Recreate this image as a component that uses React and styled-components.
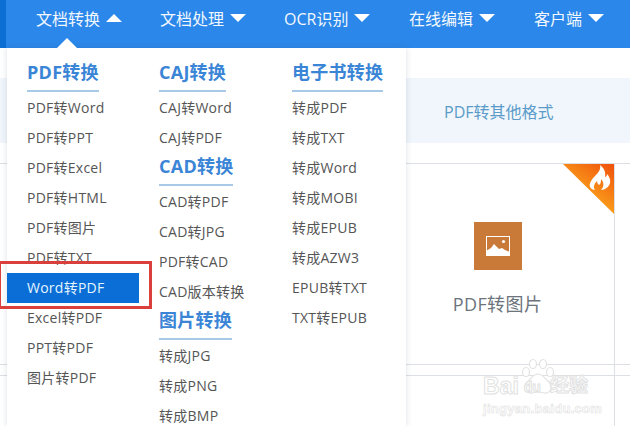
import React from 'react';
import styled, { createGlobalStyle } from 'styled-components';

const GlobalStyle = createGlobalStyle`
  html, body {
    margin: 0;
    padding: 0;
    background: #fff;
  }
  body {
    font-family: "Open Sans", "Noto Sans CJK SC", sans-serif;
  }
`;

const Page = styled.div`
  position: relative;
  width: 630px;
  height: 426px;
  overflow: hidden;
  background: #fff;
`;

const NavBar = styled.nav`
  display: flex;
  height: 48px;
  padding-left: 30px;
  background: #2b87e9;
  border-left: 6px solid #0b6fd4;
  box-sizing: border-box;
`;

const NavItem = styled.div`
  display: flex;
  align-items: center;
  gap: 6px;
  width: ${props => props.width}px;
  height: 36px;
  color: #f2f8fe;
  font-size: 16px;
`;

const Arrow = styled.span`
  width: 0;
  height: 0;
  border-left: 8px solid transparent;
  border-right: 8px solid transparent;
  ${props => (props.up ? 'border-bottom: 8px solid #fff;' : 'border-top: 8px solid #fff;')}
`;

const Content = styled.main`
  padding-top: 30px;
`;

const TabStrip = styled.div`
  display: flex;
  align-items: center;
  height: 65px;
  padding-left: 444px;
  background: #f0f6fb;
  color: #5b9bc9;
  font-size: 16px;
`;

const CardRow = styled.div`
  display: flex;
  height: 200px;
  margin-top: 20px;
  border-top: 1px solid #dcdfe4;
  border-bottom: 1px solid #dcdfe4;
`;

const Card = styled.div`
  position: relative;
  display: flex;
  flex-direction: column;
  align-items: center;
  width: 615px;
  padding: 58px 0 0 381px;
  box-sizing: border-box;
  border-right: 1px solid #dcdfe4;
`;

const Corner = styled.svg`
  position: absolute;
  top: 0;
  right: 0;
`;

const CardIcon = styled.div`
  display: flex;
  align-items: center;
  justify-content: center;
  width: 48px;
  height: 48px;
  background: #c97a38;
`;

const CardLabel = styled.div`
  margin-top: 20px;
  color: #6c747c;
  font-size: 18px;
  letter-spacing: 0.4px;
  white-space: nowrap;
`;

const RowGap = styled.div`
  width: 614px;
  height: 10px;
  border-right: 1px solid #dcdfe4;
`;

const LowerRow = styled.div`
  border-top: 1px solid #dcdfe4;
`;

const LowerCell = styled.div`
  width: 614px;
  height: 60px;
  border-right: 1px solid #dcdfe4;
`;

const Dropdown = styled.div`
  position: absolute;
  top: 48px;
  left: 7px;
  display: flex;
  width: 399px;
  height: 378px;
  padding-left: 20px;
  box-sizing: border-box;
  background: #fff;
  box-shadow: 0 0 6px rgba(60, 80, 110, 0.18);
`;

const Notch = styled.span`
  position: absolute;
  top: -10px;
  left: 50px;
  width: 0;
  height: 0;
  border-left: 10px solid transparent;
  border-right: 10px solid transparent;
  border-bottom: 10px solid #fff;
`;

const Column = styled.div`
  display: flex;
  flex-direction: column;
  align-items: flex-start;
  width: ${props => props.width}px;
  padding-top: 11px;
`;

const GroupTitle = styled.div`
  margin-bottom: 1px;
  padding-bottom: 4px;
  color: #3a85d6;
  font-size: 18px;
  font-weight: 700;
  line-height: 27px;
  letter-spacing: 0.25px;
  white-space: nowrap;
  border-bottom: 2px solid #a9c9e8;
`;

const MenuLink = styled.div`
  height: 30px;
  color: #555;
  font-size: 14px;
  line-height: 30px;
  letter-spacing: 0.25px;
  white-space: nowrap;
`;

const ActiveLink = styled(MenuLink)`
  width: 132px;
  margin-left: -20px;
  padding-left: 20px;
  box-sizing: border-box;
  color: #e4f6ff;
  background: #0b6dd6;
`;

const Highlight = styled.div`
  position: absolute;
  top: 261px;
  left: -2px;
  width: 154px;
  height: 48px;
  border: 3px solid #d9403c;
  box-sizing: border-box;
`;

const Watermark = styled.div`
  position: absolute;
  top: 358px;
  left: 483px;
  width: 116px;
  padding-top: 16px;
`;

const Paw = styled.svg`
  position: absolute;
  top: 0;
  left: 37px;
`;

const WatermarkLogo = styled.div`
  position: relative;
  display: flex;
  align-items: center;
  color: #fff;
  font-family: "Liberation Sans", "Noto Sans CJK SC", sans-serif;
  font-size: 23px;
  font-weight: 700;
  line-height: 22px;
  -webkit-text-stroke: 1px #e2e2e2;
`;

const WatermarkDu = styled.span`
  margin: 2px 9px 0 5px;
  font-size: 14px;
`;

const WatermarkCn = styled.span`
  font-size: 19px;
`;

const WatermarkUrl = styled.div`
  margin-top: 4px;
  color: #fff;
  font-family: "Liberation Sans", sans-serif;
  font-size: 13px;
  font-weight: 700;
  line-height: 14px;
  letter-spacing: 0.3px;
  white-space: nowrap;
  -webkit-text-stroke: 0.6px #e2e2e2;
`;

const columns = [
  {
    width: 132,
    groups: [
      {
        title: 'PDF转换',
        links: ['PDF转Word', 'PDF转PPT', 'PDF转Excel', 'PDF转HTML', 'PDF转图片', 'PDF转TXT', 'Word转PDF', 'Excel转PDF', 'PPT转PDF', '图片转PDF'],
      },
    ],
  },
  {
    width: 133,
    groups: [
      { title: 'CAJ转换', links: ['CAJ转Word', 'CAJ转PDF'] },
      { title: 'CAD转换', links: ['CAD转PDF', 'CAD转JPG', 'PDF转CAD', 'CAD版本转换'] },
      { title: '图片转换', links: ['转成JPG', '转成PNG', '转成BMP'] },
    ],
  },
  {
    width: 110,
    groups: [
      {
        title: '电子书转换',
        links: ['转成PDF', '转成TXT', '转成Word', '转成MOBI', '转成EPUB', '转成AZW3', 'EPUB转TXT', 'TXT转EPUB'],
      },
    ],
  },
];

const navItems = [
  { label: '文档转换', width: 124, up: true },
  { label: '文档处理', width: 124 },
  { label: 'OCR识别', width: 125 },
  { label: '在线编辑', width: 125 },
  { label: '客户端', width: 90 },
];

const App = () => (
  <Page>
    <GlobalStyle />
    <NavBar>
      {navItems.map(item => (
        <NavItem key={item.label} width={item.width}>
          {item.label}
          <Arrow up={item.up} />
        </NavItem>
      ))}
    </NavBar>
    <Content>
      <TabStrip>PDF转其他格式</TabStrip>
      <CardRow>
        <Card>
          <Corner width="51" height="50" viewBox="0 0 51 50">
            <defs>
              <linearGradient id="hot" x1="1" y1="0" x2="0.45" y2="0.75">
                <stop offset="0" stopColor="#f0500c" />
                <stop offset="1" stopColor="#fba61c" />
              </linearGradient>
            </defs>
            <polygon points="0,0 51,0 51,50" fill="url(#hot)" />
            <path d="M37 1c1 4-1 7-5 11-4 4-6 8-5 11 1 2 3 3 5 3-2-3-1-6 2-9 0 2 1 3 2 4 2-1 2-4 2-6 2 2 3 5 2 8-1 1-1 2-2 3 4 0 8-3 9-7 1-3-1-7-3-9 0 2-1 3-2 3 1-5-1-9-5-12z" fill="#fff" />
          </Corner>
          <CardIcon>
            <svg width="24" height="20" viewBox="0 0 24 20">
              <rect x="0.5" y="0.5" width="23" height="19" fill="none" stroke="#fff" />
              <path d="M0 20v-5l5-3 3-4 5 5 3-1 3 2 5 2v4z" fill="#fff" />
              <circle cx="17.5" cy="5.5" r="1.6" fill="#fff" />
            </svg>
          </CardIcon>
          <CardLabel>PDF转图片</CardLabel>
        </Card>
      </CardRow>
      <RowGap />
      <LowerRow>
        <LowerCell />
      </LowerRow>
    </Content>
    <Dropdown>
      <Notch />
      {columns.map(column => (
        <Column key={column.groups[0].title} width={column.width}>
          {column.groups.map(group => (
            <React.Fragment key={group.title}>
              <GroupTitle>{group.title}</GroupTitle>
              {group.links.map(link =>
                link === 'Word转PDF' ? (
                  <ActiveLink key={link}>{link}</ActiveLink>
                ) : (
                  <MenuLink key={link}>{link}</MenuLink>
                )
              )}
            </React.Fragment>
          ))}
        </Column>
      ))}
    </Dropdown>
    <Highlight />
    <Watermark>
      <Paw width="36" height="38" viewBox="0 0 36 38" fill="#fff" stroke="#e2e2e2" strokeWidth="1.2">
        <ellipse cx="6" cy="14" rx="3.5" ry="4.5" />
        <ellipse cx="13" cy="6" rx="3.5" ry="4.5" />
        <ellipse cx="23" cy="6" rx="3.5" ry="4.5" />
        <ellipse cx="30" cy="14" rx="3.5" ry="4.5" />
        <path d="M18 16c5 0 7 5 11 8 4 4 2 12-5 11-3-1-9-1-12 0-7 1-9-7-5-11 4-3 6-8 11-8z" />
      </Paw>
      <WatermarkLogo>
        Bai
        <WatermarkDu>du</WatermarkDu>
        <WatermarkCn>经验</WatermarkCn>
      </WatermarkLogo>
      <WatermarkUrl>jingyan.baidu.com</WatermarkUrl>
    </Watermark>
  </Page>
);

export default App;
